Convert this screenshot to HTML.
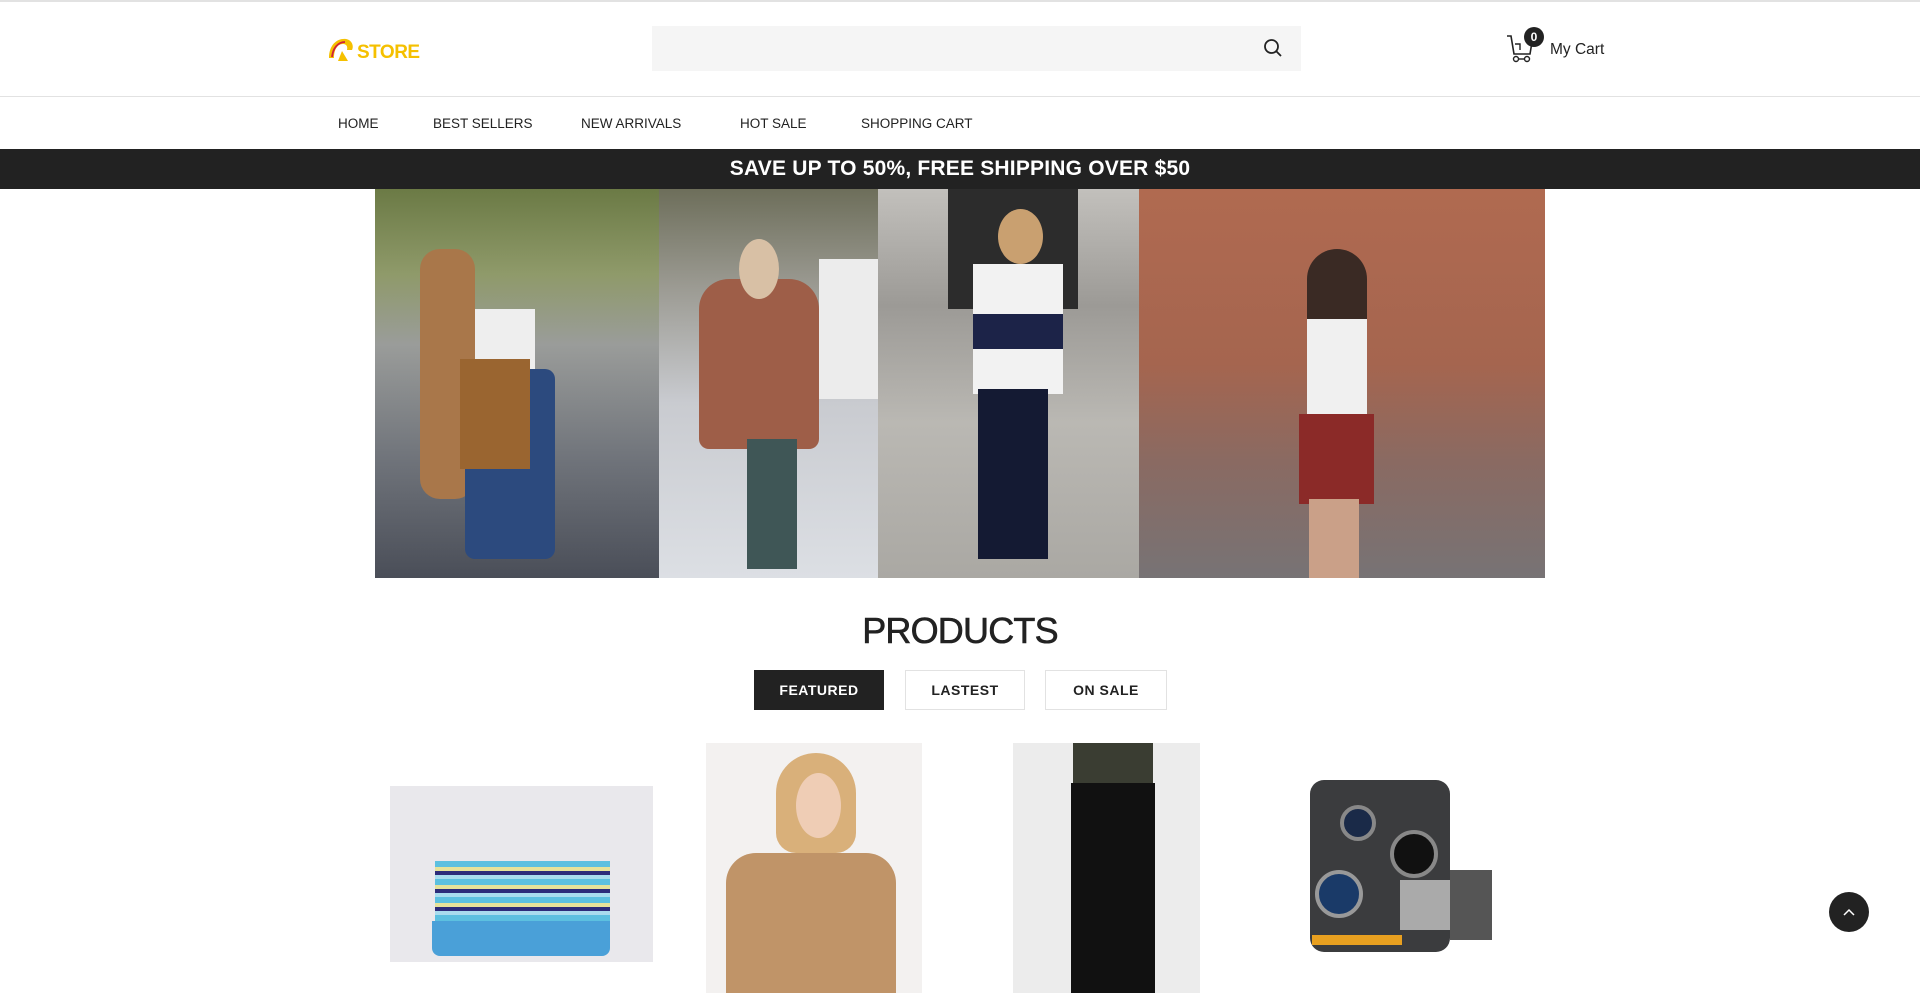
<!DOCTYPE html>
<html><head><meta charset="utf-8"><style>
*{margin:0;padding:0;box-sizing:border-box}
body{width:1920px;height:993px;overflow:hidden;background:#fff;font-family:"Liberation Sans",sans-serif;color:#222;position:relative}
.a{position:absolute}
</style></head><body>
<div class="a" style="left:0;top:0;width:1920px;height:2px;background:#e2e2e2"></div>
<svg class="a" style="left:326px;top:34px" width="30" height="30" viewBox="0 0 30 30">
<path d="M3 24 C3 10 12 4 20 5 C26 6 28 12 26 16 L21 16 C22 12 20 10 17 10 C11 10 8 16 8 24 Z" fill="#f5c000"/>
<path d="M6 23 C7 14 12 8 19 8" stroke="#d0203a" stroke-width="1.8" fill="none"/>
<path d="M12 27 L16 17 L22 27 Z" fill="#f5c000"/>
</svg>
<div class="a" style="left:357px;top:42px;font-size:19px;font-weight:bold;color:#f5c000;letter-spacing:-0.5px">STORE</div>
<div class="a" style="left:652px;top:26px;width:649px;height:45px;background:#f5f5f5"></div>
<svg class="a" style="left:1263px;top:38px" width="20" height="20" viewBox="0 0 20 20"><circle cx="8.5" cy="8.5" r="6.5" stroke="#222" stroke-width="1.8" fill="none"/><path d="M13.3 13.3 L18 18" stroke="#222" stroke-width="1.8"/></svg>
<svg class="a" style="left:1506px;top:32px" width="30" height="32" viewBox="0 0 30 32">
<path d="M1 4 H5 L8 22 H24 L26 10" stroke="#222" stroke-width="1.6" fill="none"/><path d="M9 12 H14 V18" stroke="#222" stroke-width="1.4" fill="none"/>
<circle cx="10" cy="27" r="2.5" stroke="#222" stroke-width="1.4" fill="none"/><circle cx="21" cy="27" r="2.5" stroke="#222" stroke-width="1.4" fill="none"/><path d="M12.5 27 H18.5" stroke="#222" stroke-width="1.4"/>
</svg>
<div class="a" style="left:1524px;top:27px;width:20px;height:20px;border-radius:50%;background:#222;color:#fff;font-size:12px;font-weight:bold;text-align:center;line-height:20px">0</div>
<div class="a" style="left:1550px;top:41px;font-size:15.5px;color:#222">My Cart</div>
<div class="a" style="left:0;top:96px;width:1920px;height:1px;background:#e2e2e2"></div>
<div class="a" style="top:116px;left:0;font-size:13.5px;color:#222;width:1920px">
<span class="a" style="left:338px">HOME</span><span class="a" style="left:433px">BEST SELLERS</span><span class="a" style="left:581px">NEW ARRIVALS</span><span class="a" style="left:740px">HOT SALE</span><span class="a" style="left:861px">SHOPPING CART</span></div>
<div class="a" style="left:0;top:149px;width:1920px;height:40px;background:#222;color:#fff;font-weight:bold;font-size:21px;text-align:center;line-height:40px;letter-spacing:0.2px">SAVE UP TO 50%, FREE SHIPPING OVER $50</div>
<div class="a" style="left:375px;top:189px;width:284px;height:389px;background:linear-gradient(180deg,#6b7a45 0%,#8f9a6a 22%,#9a9c9a 40%,#6f737a 70%,#4a4e58 100%)">
<div class="a" style="left:45px;top:60px;width:55px;height:250px;background:#a9774a;border-radius:20px"></div>
<div class="a" style="left:100px;top:120px;width:60px;height:60px;background:#eee"></div>
<div class="a" style="left:90px;top:180px;width:90px;height:190px;background:#2c4a7e;border-radius:10px"></div>
<div class="a" style="left:85px;top:170px;width:70px;height:110px;background:#9a6530"></div>
</div>
<div class="a" style="left:659px;top:189px;width:219px;height:389px;background:linear-gradient(180deg,#6d6e5a 0%,#9b9a92 25%,#c9cbd0 55%,#dcdfe4 100%)">
<div class="a" style="left:40px;top:90px;width:120px;height:170px;background:#9e5e48;border-radius:30px 30px 10px 10px"></div>
<div class="a" style="left:80px;top:50px;width:40px;height:60px;background:#d8c0a5;border-radius:50%"></div>
<div class="a" style="left:88px;top:250px;width:50px;height:130px;background:#3f5656"></div>
<div class="a" style="left:160px;top:70px;width:59px;height:140px;background:#ececec"></div>
</div>
<div class="a" style="left:878px;top:189px;width:261px;height:389px;background:linear-gradient(180deg,#c2c0bc 0%,#9c9a96 30%,#bab8b3 60%,#aaa8a3 100%)">
<div class="a" style="left:70px;top:0;width:130px;height:120px;background:#2c2c2c"></div>
<div class="a" style="left:95px;top:75px;width:90px;height:130px;background:#f2f2f2"></div>
<div class="a" style="left:95px;top:125px;width:90px;height:35px;background:#1c2348"></div>
<div class="a" style="left:100px;top:200px;width:70px;height:170px;background:#141a33"></div>
<div class="a" style="left:120px;top:20px;width:45px;height:55px;background:#c9a070;border-radius:50%"></div>
</div>
<div class="a" style="left:1139px;top:189px;width:406px;height:389px;background:linear-gradient(180deg,#b06a50 0%,#a5654f 45%,#8a6a62 70%,#777375 100%)">
<div class="a" style="left:168px;top:60px;width:60px;height:120px;background:#3a2a24;border-radius:30px"></div>
<div class="a" style="left:168px;top:130px;width:60px;height:100px;background:#f0f0f0"></div>
<div class="a" style="left:160px;top:225px;width:75px;height:90px;background:#8b2a28"></div>
<div class="a" style="left:170px;top:310px;width:50px;height:79px;background:#caa088"></div>
</div>
<div class="a" style="left:0;top:610px;width:1920px;text-align:center;font-size:36px;color:#222;letter-spacing:-0.8px;-webkit-text-stroke:0.6px #222">PRODUCTS</div>
<div class="a" style="left:754px;top:670px;width:130px;height:40px;background:#222;color:#fff;font-size:14px;font-weight:bold;text-align:center;line-height:40px;letter-spacing:0.5px">FEATURED</div>
<div class="a" style="left:905px;top:670px;width:120px;height:40px;border:1px solid #e2e2e2;font-size:14px;font-weight:bold;text-align:center;line-height:38px;letter-spacing:0.5px">LASTEST</div>
<div class="a" style="left:1045px;top:670px;width:122px;height:40px;border:1px solid #e2e2e2;font-size:14px;font-weight:bold;text-align:center;line-height:38px;letter-spacing:0.5px">ON SALE</div>
<div class="a" style="left:390px;top:786px;width:263px;height:176px;background:#e9e8ec">
<div class="a" style="left:45px;top:75px;width:175px;height:60px;background:repeating-linear-gradient(180deg,#5cc0e0 0 6px,#e6e29a 6px 10px,#2c2c7a 10px 14px,#a8dcee 14px 18px)"></div>
<div class="a" style="left:42px;top:135px;width:178px;height:35px;background:#4aa0d8;border-radius:0 0 8px 8px"></div>
</div>
<div class="a" style="left:706px;top:743px;width:216px;height:250px;background:#f3f1f0">
<div class="a" style="left:70px;top:10px;width:80px;height:100px;background:#d9b07a;border-radius:40px 40px 20px 20px"></div>
<div class="a" style="left:90px;top:30px;width:45px;height:65px;background:#efcdb5;border-radius:50%"></div>
<div class="a" style="left:20px;top:110px;width:170px;height:140px;background:#c09468;border-radius:30px 30px 0 0"></div>
</div>
<div class="a" style="left:1013px;top:743px;width:187px;height:250px;background:#ececec">
<div class="a" style="left:60px;top:0;width:80px;height:60px;background:#3a3d32"></div>
<div class="a" style="left:58px;top:40px;width:84px;height:210px;background:#111"></div>
</div>
<div class="a" style="left:1310px;top:780px;width:140px;height:172px;background:#3b3c3e;border-radius:14px"></div>
<div class="a" style="left:1340px;top:805px;width:36px;height:36px;border-radius:50%;background:#1a2a48;border:4px solid #888"></div>
<div class="a" style="left:1390px;top:830px;width:48px;height:48px;border-radius:50%;background:#111;border:4px solid #888"></div>
<div class="a" style="left:1315px;top:870px;width:48px;height:48px;border-radius:50%;background:#1a3a68;border:4px solid #999"></div>
<div class="a" style="left:1400px;top:880px;width:50px;height:50px;background:#aaa"></div>
<div class="a" style="left:1450px;top:870px;width:42px;height:70px;background:#555"></div>
<div class="a" style="left:1312px;top:935px;width:90px;height:10px;background:#e8a020"></div>
<div class="a" style="left:1829px;top:892px;width:40px;height:40px;border-radius:50%;background:#222"></div>
<svg class="a" style="left:1841px;top:905px" width="16" height="14" viewBox="0 0 16 14"><path d="M3 10 L8 5 L13 10" stroke="#fff" stroke-width="1.5" fill="none"/></svg>
</body></html>
